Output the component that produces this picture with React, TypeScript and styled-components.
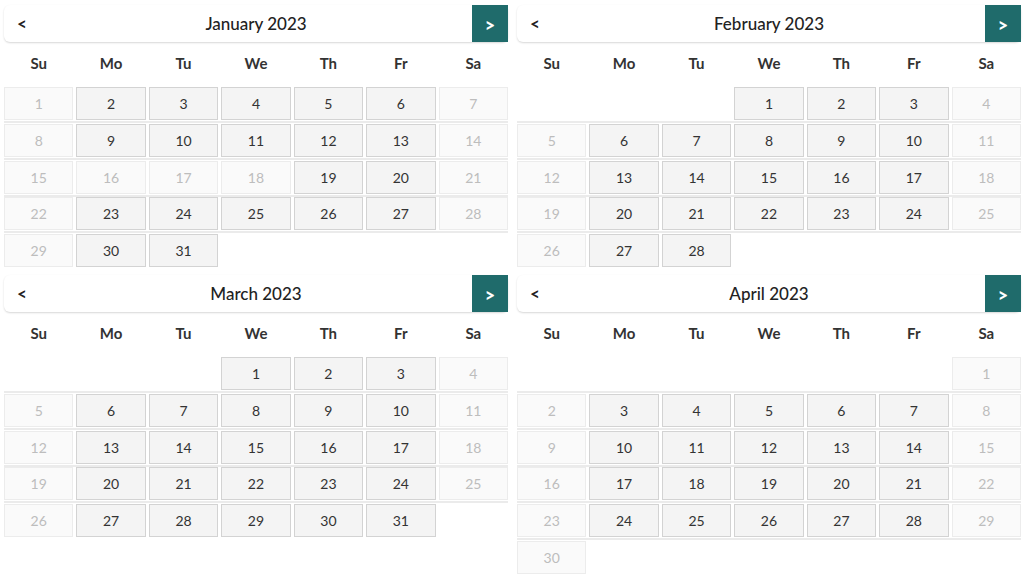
import styled, { createGlobalStyle } from 'styled-components'

const GlobalStyle = createGlobalStyle`
	body {
		margin: 0;
		background: #ffffff;
		font-family: 'Lato', 'Noto Sans', sans-serif;
		color: #2b2b2b;
	}
`

const Page = styled.div`
	display: grid;
	grid-template-columns: 504px 504px;
	column-gap: 9px;
	row-gap: 8px;
	align-items: start;
	padding: 5px 0 0 4px;
`

const Calendar = styled.div`
	display: flex;
	flex-direction: column;
	width: 504px;
`

const Header = styled.div`
	display: flex;
	align-items: center;
	height: 37px;
	background: #ffffff;
	border-radius: 6px;
	box-shadow: 0 1px 2px rgba(0, 0, 0, 0.16);
`

const PrevButton = styled.button`
	width: 36px;
	height: 37px;
	border: none;
	background: transparent;
	color: #222;
	font-family: inherit;
	font-size: 17px;
	font-weight: 700;
	padding: 0 0 0 13px;
	text-align: left;
	cursor: pointer;
`

const Title = styled.div`
	flex: 1;
	text-align: center;
	font-size: 17px;
	font-weight: 500;
	color: #222;
`

const NextButton = styled.button`
	width: 36px;
	height: 37px;
	border: none;
	background: #1f6b6b;
	color: #ffffff;
	font-family: inherit;
	font-size: 18px;
	font-weight: 900;
	padding: 3px 0 0;
	cursor: pointer;
`

const Grid = styled.div`
	display: grid;
	grid-template-columns: repeat(7, 1fr);
	column-gap: 3px;
`

const DayNames = styled(Grid)`
	height: 45px;
	align-items: center;
`

const DayName = styled.div`
	text-align: center;
	font-size: 15px;
	font-weight: 700;
	color: #333;
	padding-bottom: 3px;
`

const Week = styled(Grid)`
	& + & {
		margin-top: 1px;
		padding-top: 0.75px;
		border-top: 2px solid #ebebeb;
	}
`

const Cell = styled.div<{ $disabled?: boolean }>`
	box-sizing: border-box;
	height: 33px;
	display: flex;
	align-items: center;
	justify-content: center;
	font-size: 14px;
	background: ${(p) => (p.$disabled ? '#fafafa' : '#f4f4f4')};
	border: 1px solid ${(p) => (p.$disabled ? '#ececec' : '#d3d3d3')};
	color: ${(p) => (p.$disabled ? '#bdbdbd' : '#333')};
`

const Empty = styled.div`
	height: 33px;
`

const dayNames = ['Su', 'Mo', 'Tu', 'We', 'Th', 'Fr', 'Sa']
const monthNames = ['January', 'February', 'March', 'April']
const holidays: Record<number, number[]> = { 0: [16, 17, 18] }

function weeksOf(month: number) {
	const first = new Date(2023, month, 1).getDay()
	const count = new Date(2023, month + 1, 0).getDate()
	const cells: (number | null)[] = Array(first).fill(null)
	for (let d = 1; d <= count; d++) cells.push(d)
	const weeks: (number | null)[][] = []
	for (let i = 0; i < cells.length; i += 7) weeks.push(cells.slice(i, i + 7))
	return weeks
}

function Month({ month }: { month: number }) {
	const weeks = weeksOf(month)
	return (
		<Calendar>
			<Header>
				<PrevButton>&lt;</PrevButton>
				<Title>{monthNames[month]} 2023</Title>
				<NextButton>&gt;</NextButton>
			</Header>
			<DayNames>
				{dayNames.map((n) => (
					<DayName key={n}>{n}</DayName>
				))}
			</DayNames>
			{weeks.map((week, wi) => (
				<Week key={wi}>
					{week.map((d, i) =>
						d === null ? (
							<Empty key={i} />
						) : (
							<Cell
								key={i}
								$disabled={i === 0 || i === 6 || (holidays[month] || []).includes(d)}
							>
								{d}
							</Cell>
						)
					)}
				</Week>
			))}
		</Calendar>
	)
}

export default function App() {
	return (
		<>
			<GlobalStyle />
			<Page>
				{[0, 1, 2, 3].map((m) => (
					<Month key={m} month={m} />
				))}
			</Page>
		</>
	)
}
